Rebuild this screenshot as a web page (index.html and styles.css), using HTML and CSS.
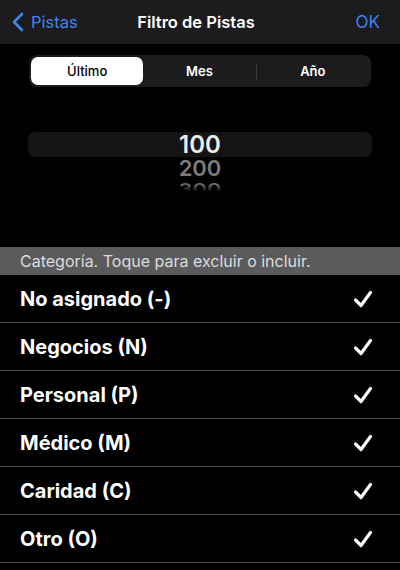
FILE: index.html
```html
<!DOCTYPE html>
<html>
<head>
  <meta charset="utf-8">
  <title>Filtro de Pistas</title>
  <link rel="stylesheet" href="styles.css">
</head>
<body>
  <header class="navbar">
    <a class="nav-back">
      <svg width="12" height="20" viewBox="0 0 12 20"><polyline points="10,2 2,10 10,18" fill="none" stroke="#3d85f0" stroke-width="2.6" stroke-linecap="round" stroke-linejoin="round"/></svg>
      <span>Pistas</span>
    </a>
    <h1 class="nav-title">Filtro de Pistas</h1>
    <a class="nav-ok">OK</a>
  </header>

  <div class="segmented">
    <div class="seg seg-active">Último</div>
    <div class="seg">Mes</div>
    <div class="seg seg-last">Año</div>
  </div>

  <div class="picker">
    <div class="pick-row pick-current">100</div>
    <div class="pick-row pick-next">200</div>
    <div class="pick-row pick-far"><span>300</span></div>
  </div>

  <div class="section-header">Categoría. Toque para excluir o incluir.</div>

  <ul class="list">
    <li><span>No asignado (-)</span><svg class="check" width="20" height="18" viewBox="0 0 20 18"><polyline points="2.5,10 8,15.5 17.5,2.5" /></svg></li>
    <li><span>Negocios (N)</span><svg class="check" width="20" height="18" viewBox="0 0 20 18"><polyline points="2.5,10 8,15.5 17.5,2.5" /></svg></li>
    <li><span>Personal (P)</span><svg class="check" width="20" height="18" viewBox="0 0 20 18"><polyline points="2.5,10 8,15.5 17.5,2.5" /></svg></li>
    <li><span>Médico (M)</span><svg class="check" width="20" height="18" viewBox="0 0 20 18"><polyline points="2.5,10 8,15.5 17.5,2.5" /></svg></li>
    <li><span>Caridad (C)</span><svg class="check" width="20" height="18" viewBox="0 0 20 18"><polyline points="2.5,10 8,15.5 17.5,2.5" /></svg></li>
    <li><span>Otro (O)</span><svg class="check" width="20" height="18" viewBox="0 0 20 18"><polyline points="2.5,10 8,15.5 17.5,2.5" /></svg></li>
  </ul>
</body>
</html>
```

FILE: styles.css
```css
body {
  margin: 0;
  background: #000;
  color: #fff;
  font-family: Inter, "Open Sans", sans-serif;
  overflow: hidden;
}
.navbar {
  height: 44px;
  background: #1c1c1e;
  display: flex;
  align-items: center;
  justify-content: space-between;
  padding: 0 20px 0 12px;
}
.nav-back {
  display: flex;
  align-items: center;
  gap: 7px;
  color: #3d85f0;
  font-size: 16.5px;
  width: 90px;
}
.nav-title {
  margin: 0;
  font-size: 16.5px;
  font-weight: 600;
}
.nav-ok {
  color: #3d85f0;
  font-size: 17px;
  width: 90px;
  text-align: right;
}
.segmented {
  margin: 11px 29px 0;
  height: 32px;
  box-sizing: border-box;
  padding: 2px;
  background: #1c1c1e;
  border-radius: 8px;
  display: flex;
}
.seg {
  flex: 1;
  display: flex;
  align-items: center;
  justify-content: center;
  font-size: 13px;
  font-weight: 600;
}
.seg-active {
  background: #fff;
  color: #000;
  font-weight: 500;
  border-radius: 7px;
}
.seg-last {
  border-left: 1px solid #3a3a3c;
  margin: 6px 0;
}
.picker {
  height: 160px;
  padding-top: 45px;
  box-sizing: border-box;
}
.pick-row {
  text-align: center;
  font-weight: 600;
}
.pick-current {
  margin: 0 28px;
  height: 25px;
  line-height: 26px;
  background: #141416;
  border-radius: 7px;
  font-size: 24px;
  color: #ececec;
}
.pick-next {
  height: 22px;
  line-height: 22px;
  font-size: 22px;
  color: #7c7c7c;
}
.pick-far {
  height: 12px;
  overflow: hidden;
  font-size: 22px;
}
.pick-far span {
  display: inline-block;
  line-height: 20px;
  transform: scaleY(0.7);
  transform-origin: top;
  color: #6a6a6a;
  -webkit-mask-image: linear-gradient(to bottom, #000 20%, transparent 70%);
}
.section-header {
  height: 28px;
  line-height: 28px;
  background: #5b5b5d;
  color: #dcdcdc;
  font-size: 16px;
  padding-left: 20px;
}
.list {
  list-style: none;
  margin: 0;
  padding: 0;
}
.list li {
  height: 47px;
  border-bottom: 1px solid #4a4a4c;
  display: flex;
  align-items: center;
  justify-content: space-between;
  padding: 0 27px 0 20px;
  font-size: 20px;
  font-weight: 700;
}
.check polyline {
  fill: none;
  stroke: #fff;
  stroke-width: 3.2;
  stroke-linecap: round;
  stroke-linejoin: round;
}
```
